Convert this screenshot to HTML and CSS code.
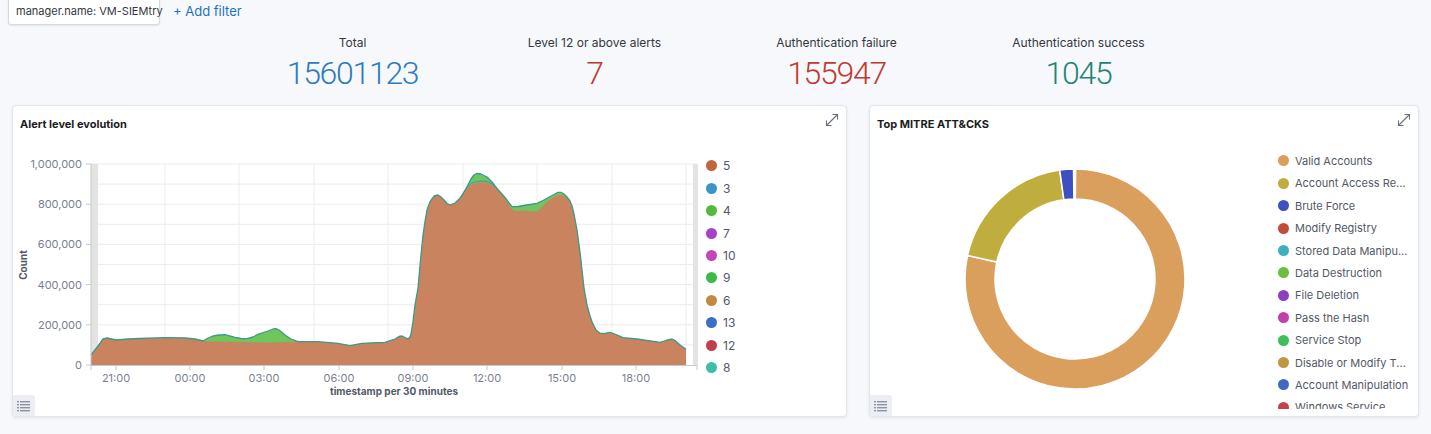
FILE: index.html
```html
<!DOCTYPE html>
<html>
<head>
<meta charset="utf-8">
<link rel="stylesheet" href="styles.css">
</head>
<body>
<div class="filterbar">
  <div class="pill">manager.name: VM-SIEMtry</div>
  <a class="add-filter">+ Add filter</a>
</div>

<div class="metrics">
  <div class="metric"><div class="m-label">Total</div><div class="m-value blue">15601123</div></div>
  <div class="metric"><div class="m-label">Level 12 or above alerts</div><div class="m-value red">7</div></div>
  <div class="metric"><div class="m-label">Authentication failure</div><div class="m-value red">155947</div></div>
  <div class="metric"><div class="m-label">Authentication success</div><div class="m-value teal">1045</div></div>
</div>

<div class="panels">
  <div class="panel panel-left">
    <div class="panel-head">
      <span class="panel-title">Alert level evolution</span>
      <svg class="expand" width="16" height="16" viewBox="0 0 16 16"><path d="M2.5 13.5 L13.5 2.5 M8.5 2.5 H13.5 V7.5 M2.5 8.5 V13.5 H7.5" fill="none" stroke="#69707d" stroke-width="1.1"/></svg>
    </div>
    <div class="panel-body">
      <svg class="area-chart" width="690" height="262" viewBox="13 140 690 262">
        <g class="grid" stroke="#ececec" stroke-width="1">
          <line x1="91" y1="164" x2="697" y2="164"/>
          <line x1="91" y1="184.1" x2="697" y2="184.1"/>
          <line x1="91" y1="204.2" x2="697" y2="204.2"/>
          <line x1="91" y1="224.3" x2="697" y2="224.3"/>
          <line x1="91" y1="244.4" x2="697" y2="244.4"/>
          <line x1="91" y1="264.5" x2="697" y2="264.5"/>
          <line x1="91" y1="284.6" x2="697" y2="284.6"/>
          <line x1="91" y1="304.7" x2="697" y2="304.7"/>
          <line x1="91" y1="324.8" x2="697" y2="324.8"/>
          <line x1="91" y1="344.9" x2="697" y2="344.9"/>
          <line x1="165" y1="164" x2="165" y2="365"/>
          <line x1="239" y1="164" x2="239" y2="365"/>
          <line x1="314" y1="164" x2="314" y2="365"/>
          <line x1="388" y1="164" x2="388" y2="365"/>
          <line x1="463" y1="164" x2="463" y2="365"/>
          <line x1="537" y1="164" x2="537" y2="365"/>
          <line x1="612" y1="164" x2="612" y2="365"/>
          <line x1="686" y1="164" x2="686" y2="365"/>
        </g>
        <rect x="91" y="164" width="7" height="201" fill="#e3e3e3"/>
        <rect x="693" y="164" width="5" height="201" fill="#e3e3e3"/>
        <path fill="#6fc65c" d="M91,365 L91,355 98,346 103,339 107,338 116,340 128,339 140,338.5 165,337.7 185,338 195,339 203,341 208,338 213,336 219,335 225,334.7 235,337.3 241,338.5 247,338.7 253,337 258,334.3 268,331 273,329 276,328.7 279,330 285,335 291,339 298,341.7 318,341.7 338,343.3 350,345.7 362,343.3 385,342.3 395,339 399,336.5 402,336 405,337.5 408,339 410,337 411,334 413,321.7 415,305 418,288 421,255 423,235 425,221.7 427,210 430,201.7 434,196 438,195 441,197 444,200 447,203.5 450,205 455,203 460,198.3 464,192 467,186.7 471,179 474,175 477,173.3 481,174 487,177 492,182 497,188.3 501,193 505,197.5 509,203 512,206.7 518,206.5 527,205 537,203.3 543,200.5 548,197.7 554,194.5 558,192.3 561,192.3 564,194 567,197 570,201 572,206 574,214 577,230 580,252 582,270 584,288 587,305 590,316 592,321.7 596,330 600,333.3 605,333.3 610,332.3 616,334.5 623,337.7 637,339 660,342.3 666,340.5 672,339 675,340.5 678,343.3 682,346.5 686,349.3 L686,365 Z"/>
        <path fill="#c9835f" d="M91,365 L91,355 98,346 103,339 107,338 116,340 128,339 140,338.5 165,337.7 185,338 195,339 203,341 213,341.5 240,342 270,342.5 285,342 298,341.7 318,341.7 338,343.3 350,345.7 362,343.3 385,342.3 395,339 399,336.5 402,336 405,337.5 408,339 410,337 411,334 413,321.7 415,305 418,288 421,255 423,235 425,221.7 427,210 430,201.7 434,196 438,195 441,197 444,200 447,203.5 450,205 455,203 460,198.3 464,192.5 467,188.5 471,185 477,183 482,182.5 487,183 492,185 497,188.8 501,193.5 505,198.5 509,205 512,209.5 516,211 521,210.5 527,211 532,211.2 537,211.7 542,207 548,201 554,197 558,195 561,195 564,196 567,198 570,202 572,206 574,214 577,230 580,252 582,270 584,288 587,305 590,316 592,321.7 596,330 600,333.3 605,333.3 610,332.3 616,334.5 623,337.7 637,339 660,342.3 666,340.5 672,339 675,340.5 678,343.3 682,346.5 686,349.3 L686,365 Z"/>
        <polyline fill="none" stroke="#4c8fb8" stroke-width="1" points="460,198.3 464,192 467,187.5 471,183.5 477,181.5 482,181 487,181.5 492,184 497,188.5"/>
        <polyline fill="none" stroke="#3f9888" stroke-width="1.3" stroke-linejoin="round" points="91,355 98,346 103,339 107,338 116,340 128,339 140,338.5 165,337.7 185,338 195,339 203,341 208,338 213,336 219,335 225,334.7 235,337.3 241,338.5 247,338.7 253,337 258,334.3 268,331 273,329 276,328.7 279,330 285,335 291,339 298,341.7 318,341.7 338,343.3 350,345.7 362,343.3 385,342.3 395,339 399,336.5 402,336 405,337.5 408,339 410,337 411,334 413,321.7 415,305 418,288 421,255 423,235 425,221.7 427,210 430,201.7 434,196 438,195 441,197 444,200 447,203.5 450,205 455,203 460,198.3 464,192 467,186.7 471,179 474,175 477,173.3 481,174 487,177 492,182 497,188.3 501,193 505,197.5 509,203 512,206.7 518,206.5 527,205 537,203.3 543,200.5 548,197.7 554,194.5 558,192.3 561,192.3 564,194 567,197 570,201 572,206 574,214 577,230 580,252 582,270 584,288 587,305 590,316 592,321.7 596,330 600,333.3 605,333.3 610,332.3 616,334.5 623,337.7 637,339 660,342.3 666,340.5 672,339 675,340.5 678,343.3 682,346.5 686,349.3"/>
        <g stroke="#c4c8cf" stroke-width="1">
          <line x1="91" y1="164" x2="91" y2="370"/>
          <line x1="91" y1="365.5" x2="697" y2="365.5"/>
          <line x1="697" y1="365" x2="697" y2="370"/>
          <line x1="86" y1="164" x2="91" y2="164"/>
          <line x1="86" y1="204.2" x2="91" y2="204.2"/>
          <line x1="86" y1="244.4" x2="91" y2="244.4"/>
          <line x1="86" y1="284.6" x2="91" y2="284.6"/>
          <line x1="86" y1="324.8" x2="91" y2="324.8"/>
          <line x1="86" y1="365" x2="91" y2="365"/>
          <line x1="116" y1="365" x2="116" y2="370"/>
          <line x1="190" y1="365" x2="190" y2="370"/>
          <line x1="264" y1="365" x2="264" y2="370"/>
          <line x1="339" y1="365" x2="339" y2="370"/>
          <line x1="413" y1="365" x2="413" y2="370"/>
          <line x1="487" y1="365" x2="487" y2="370"/>
          <line x1="562" y1="365" x2="562" y2="370"/>
          <line x1="636" y1="365" x2="636" y2="370"/>
        </g>
        <g class="tick" text-anchor="end">
          <text x="82" y="168">1,000,000</text>
          <text x="82" y="208.2">800,000</text>
          <text x="82" y="248.4">600,000</text>
          <text x="82" y="288.6">400,000</text>
          <text x="82" y="328.8">200,000</text>
          <text x="82" y="369">0</text>
        </g>
        <g class="tick" text-anchor="middle">
          <text x="116" y="382">21:00</text>
          <text x="190" y="382">00:00</text>
          <text x="264" y="382">03:00</text>
          <text x="339" y="382">06:00</text>
          <text x="413" y="382">09:00</text>
          <text x="487" y="382">12:00</text>
          <text x="562" y="382">15:00</text>
          <text x="636" y="382">18:00</text>
        </g>
        <text class="axis-title" x="394" y="395" text-anchor="middle">timestamp per 30 minutes</text>
        <text class="axis-title" transform="translate(26.5,265) rotate(-90)" text-anchor="middle">Count</text>
      </svg>
      <ul class="legend legend-left">
        <li><i style="background:#c0643c"></i>5</li>
        <li><i style="background:#3b96c6"></i>3</li>
        <li><i style="background:#55b93c"></i>4</li>
        <li><i style="background:#a443c4"></i>7</li>
        <li><i style="background:#c645b4"></i>10</li>
        <li><i style="background:#3cb94b"></i>9</li>
        <li><i style="background:#c18a3d"></i>6</li>
        <li><i style="background:#3b6fc3"></i>13</li>
        <li><i style="background:#c43d4f"></i>12</li>
        <li><i style="background:#3dbfa6"></i>8</li>
      </ul>
    </div>
    <button class="legend-toggle" type="button"><svg width="13" height="12" viewBox="0 0 13 12"><g fill="#8a93a3"><rect x="0" y="1" width="2" height="1.4"/><rect x="3" y="1" width="10" height="1.4"/><rect x="0" y="4" width="2" height="1.4"/><rect x="3" y="4" width="10" height="1.4"/><rect x="0" y="7" width="2" height="1.4"/><rect x="3" y="7" width="10" height="1.4"/><rect x="0" y="10" width="2" height="1.4"/><rect x="3" y="10" width="10" height="1.4"/></g></svg></button>
  </div>

  <div class="panel panel-right">
    <div class="panel-head">
      <span class="panel-title">Top MITRE ATT&amp;CKS</span>
      <svg class="expand" width="16" height="16" viewBox="0 0 16 16"><path d="M2.5 13.5 L13.5 2.5 M8.5 2.5 H13.5 V7.5 M2.5 8.5 V13.5 H7.5" fill="none" stroke="#69707d" stroke-width="1.1"/></svg>
    </div>
    <div class="panel-body">
      <svg class="donut" width="405" height="265" viewBox="870 140 405 265">
        <g stroke="#ffffff" stroke-width="1.5" stroke-linejoin="round">
          <path fill="#da9f5c" d="M1075.6,169 A110,110 0 1 1 967.5,255.6 L996.8,262 A80,80 0 1 0 1075.4,199 Z"/>
          <path fill="#bfae3e" d="M967.5,255.6 A110,110 0 0 1 1059.7,170.1 L1063.9,199.8 A80,80 0 0 0 996.8,262 Z"/>
          <path fill="#3d4fc1" d="M1059.7,170.1 A110,110 0 0 1 1073.5,169 L1073.9,199 A80,80 0 0 0 1063.9,199.8 Z"/>
        </g>
      </svg>
      <ul class="legend legend-right">
        <li><i style="background:#da9f5c"></i>Valid Accounts</li>
        <li><i style="background:#bfae3e"></i>Account Access Re...</li>
        <li><i style="background:#3d4fc1"></i>Brute Force</li>
        <li><i style="background:#c14c3c"></i>Modify Registry</li>
        <li><i style="background:#3eafc0"></i>Stored Data Manipu...</li>
        <li><i style="background:#6cbf3e"></i>Data Destruction</li>
        <li><i style="background:#8e3fc1"></i>File Deletion</li>
        <li><i style="background:#c23ea9"></i>Pass the Hash</li>
        <li><i style="background:#3ebf5b"></i>Service Stop</li>
        <li><i style="background:#bf973e"></i>Disable or Modify T...</li>
        <li><i style="background:#3e6bc1"></i>Account Manipulation</li>
        <li><i style="background:#c53f4f"></i>Windows Service</li>
      </ul>
    </div>
    <button class="legend-toggle" type="button"><svg width="13" height="12" viewBox="0 0 13 12"><g fill="#8a93a3"><rect x="0" y="1" width="2" height="1.4"/><rect x="3" y="1" width="10" height="1.4"/><rect x="0" y="4" width="2" height="1.4"/><rect x="3" y="4" width="10" height="1.4"/><rect x="0" y="7" width="2" height="1.4"/><rect x="3" y="7" width="10" height="1.4"/><rect x="0" y="10" width="2" height="1.4"/><rect x="3" y="10" width="10" height="1.4"/></g></svg></button>
  </div>
</div>
</body>
</html>
```

FILE: styles.css
```css
* { box-sizing: border-box; }
html, body {
  margin: 0;
  padding: 0;
  width: 1431px;
  height: 434px;
  overflow: hidden;
  background: #f7f8fb;
  font-family: Inter, "Liberation Sans", sans-serif;
  color: #343741;
}

.filterbar {
  display: flex;
  align-items: center;
  height: 25px;
  padding-left: 8px;
}
.pill {
  margin-top: -10px;
  height: 35px;
  width: 152px;
  padding: 10px 0 0 7px;
  background: #fff;
  border: 1px solid #d3dae6;
  border-radius: 3px;
  box-shadow: 0 1px 2px rgba(0,0,0,0.08);
  font-size: 11px;
  line-height: 20px;
  white-space: nowrap;
  color: #343741;
}
.add-filter {
  margin-left: 13px;
  margin-top: -3px;
  font-size: 13px;
  color: #1a73c2;
}

.metrics {
  display: flex;
  justify-content: center;
  padding-top: 10px;
  height: 80px;
}
.metric {
  width: 242px;
  text-align: center;
}
.m-label {
  font-size: 12px;
  line-height: 16px;
  color: #343741;
}
.m-value {
  margin-top: 3px;
  font-family: Roboto, "Liberation Sans", sans-serif;
  font-weight: 300;
  font-size: 32px;
  line-height: 38px;
  letter-spacing: -1.3px;
}
.blue { color: #2d7bc2; }
.red { color: #c13a31; }
.teal { color: #1f8676; }

.panels {
  display: flex;
  gap: 22px;
  padding-left: 12px;
}
.panel {
  position: relative;
  height: 312px;
  background: #fff;
  border: 1px solid #e1e5ec;
  border-radius: 4px;
  box-shadow: 0 1px 3px rgba(60,70,90,0.10);
  display: flex;
  flex-direction: column;
  overflow: hidden;
}
.panel-left { width: 835px; }
.panel-right { width: 550px; }

.panel-head {
  height: 34px;
  display: flex;
  justify-content: space-between;
  align-items: flex-start;
  padding: 11px 6px 0 7px;
}
.panel-title {
  font-size: 11px;
  font-weight: 700;
  line-height: 14px;
  color: #1a1c21;
}
.expand { margin-top: -5px; }

.panel-body {
  display: flex;
  flex: 1;
}
.area-chart, .donut { flex: none; display: block; }
.tick {
  font-family: Inter, "Liberation Sans", sans-serif;
  font-size: 11px;
  fill: #7a8190;
}
.axis-title {
  font-family: Inter, "Liberation Sans", sans-serif;
  font-size: 10px;
  font-weight: 700;
  fill: #535966;
}

.legend {
  list-style: none;
  margin: 0;
  font-size: 11px;
  color: #535966;
}
.legend li {
  display: flex;
  align-items: center;
  height: 22.4px;
  white-space: nowrap;
}
.legend i {
  flex: none;
  width: 11px;
  height: 11px;
  border-radius: 50%;
  margin-right: 6px;
}
.legend-left {
  padding: 14.8px 0 0 3px;
  font-size: 12px;
}
.legend-right {
  padding: 0 0 0 3px;
  margin-top: 9.8px;
  height: 259px;
  overflow: hidden;
}

.legend-toggle {
  position: absolute;
  left: -1px;
  bottom: -1px;
  width: 23px;
  height: 22px;
  padding: 0;
  border: none;
  border-radius: 3px;
  background: #eceef3;
  display: flex;
  align-items: center;
  justify-content: center;
}
```
